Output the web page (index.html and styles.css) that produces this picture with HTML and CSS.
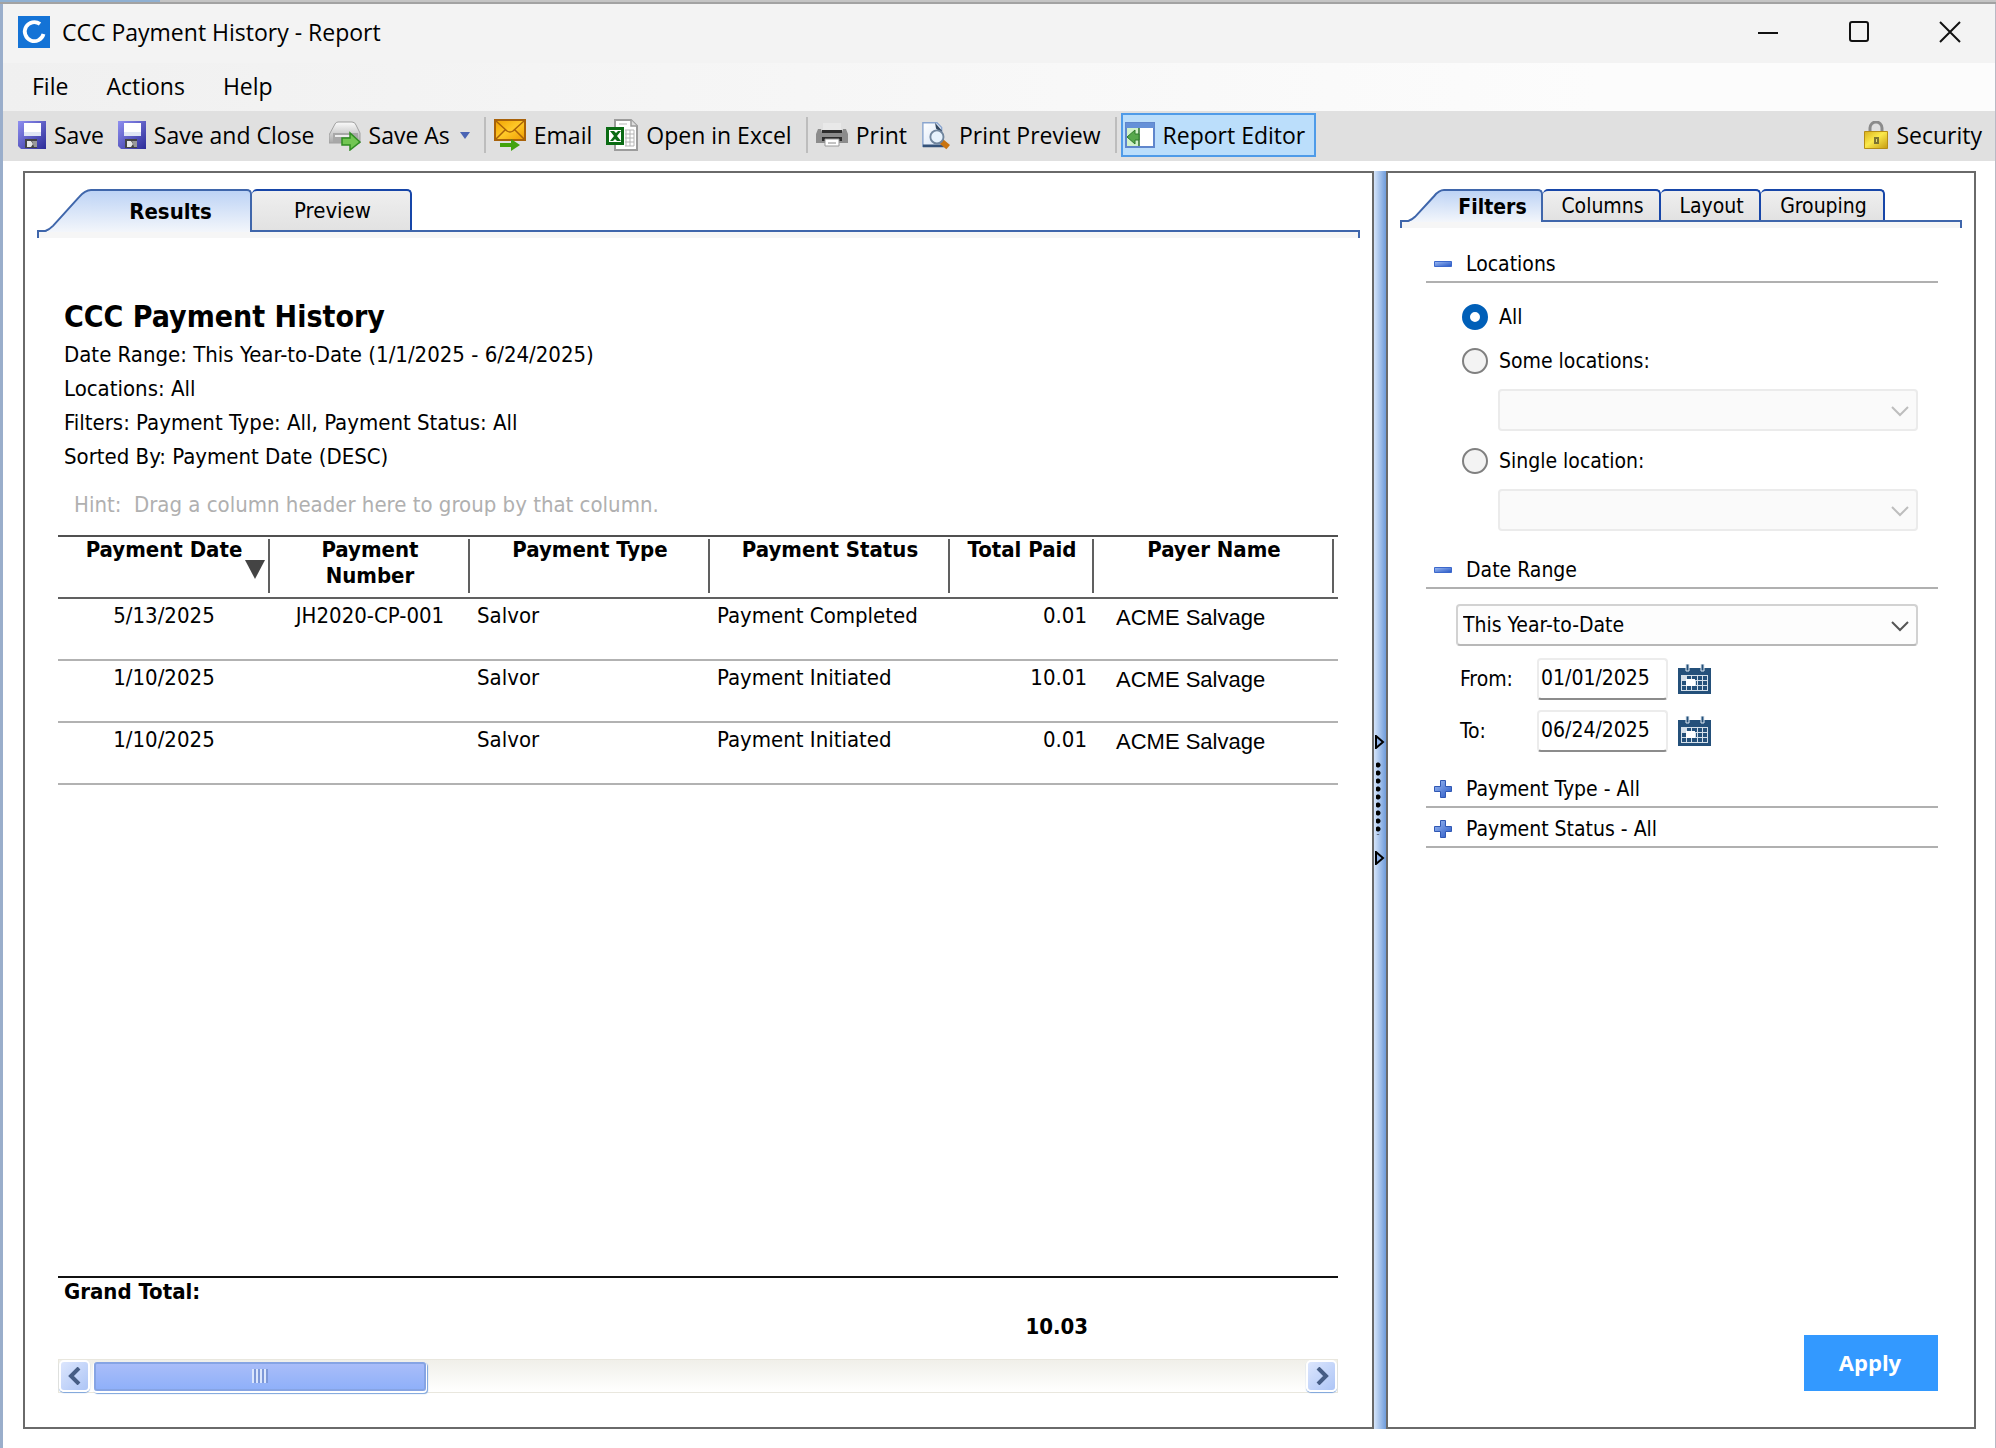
FILE: index.html
```html
<!DOCTYPE html>
<html lang="en">
<head>
    <meta charset="UTF-8">
    <meta name="viewport" content="width=device-width, initial-scale=1.0">
    <title>CCC Payment History - Report</title>
    <link rel="stylesheet" href="styles.css">
</head>
<body>
    <!-- shared gradients and the icons that are used twice -->
    <svg class="defs" aria-hidden="true">
        <defs>
            <linearGradient id="g-floppy" x1="0" y1="0" x2="1" y2="1"><stop offset="0" stop-color="#8f8ff0"/><stop offset="1" stop-color="#2c2c98"/></linearGradient>
            <linearGradient id="g-tab" x1="0" y1="0" x2="0" y2="1"><stop offset="0" stop-color="#bdd3f5"/><stop offset="1" stop-color="#f3f6fb"/></linearGradient>
            <linearGradient id="g-grey" x1="0" y1="0" x2="0" y2="1"><stop offset="0" stop-color="#fbfbfb"/><stop offset="1" stop-color="#a9a9a9"/></linearGradient>
            <linearGradient id="g-mail" x1="0" y1="0" x2="1" y2="1"><stop offset="0" stop-color="#f0a000"/><stop offset=".5" stop-color="#ffc928"/><stop offset="1" stop-color="#ef9c00"/></linearGradient>
            <linearGradient id="g-lock" x1="0" y1="0" x2="1" y2="1"><stop offset="0" stop-color="#d9b11c"/><stop offset=".45" stop-color="#fbe94c"/><stop offset="1" stop-color="#c59a10"/></linearGradient>
            <linearGradient id="g-blue" x1="0" y1="0" x2="1" y2="1"><stop offset="0" stop-color="#9fbcf3"/><stop offset="1" stop-color="#2455c4"/></linearGradient>
            <linearGradient id="g-page" x1="0" y1="0" x2="1" y2="1"><stop offset="0" stop-color="#fff"/><stop offset="1" stop-color="#d3e2f7"/></linearGradient>
            <symbol id="i-floppy" viewBox="0 0 28 28">
                <path d="M0 0h28v28H3l-3-3z" fill="url(#g-floppy)"/>
                <path d="M6 2h17v12H6z" fill="#fff"/>
                <path d="M6 11h17v4H6z" fill="#dfe6f5"/>
                <path d="M7 18h12v9H7z" fill="#444"/>
                <path d="M9 20h4l2 3-2 3H9z" fill="#e8e8e8"/>
                <path d="M14 20h5v6h-3z" fill="#9a9a9a"/>
            </symbol>
            <symbol id="i-calendar" viewBox="0 0 33 30">
                <path d="M0 4h33v26H0z" fill="#24507a"/>
                <path d="M8 0h3v7H8zM23 0h3v7h-3z" fill="#24507a" stroke="#dfe8f0" stroke-width="1"/>
                <path d="M3 11h27v16H3z" fill="#d5e0ea"/>
                <path d="M9 12h4v4H9zM14 12h5v4h-5zM20 12h4v4h-4zM25 12h4v4h-4zM4 17h4v4H4zM18 17h1v4h-1zM20 17h4v4h-4zM25 17h4v4h-4zM4 22h4v4H4zM9 22h4v4H9zM14 22h5v4h-5zM20 22h4v4h-4zM25 22h4v4h-4z" fill="#24507a"/>
                <path d="M8 15h9v7H8z" fill="#fff"/>
            </symbol>
            <symbol id="i-minus" viewBox="0 0 18 18">
                <path d="M.5 6.500h17v5H.5z" fill="url(#g-blue)" stroke="#3c68cc"/>
            </symbol>
            <symbol id="i-plus" viewBox="0 0 18 18">
                <path d="M6.500.5h5v6h6v5h-6v6h-5v-6h-6v-5h6z" fill="url(#g-blue)" stroke="#3058b4"/>
            </symbol>
            <symbol id="i-chevron" viewBox="0 0 18 11">
                <path d="M1 1l8 8 8-8" fill="none" stroke="currentColor" stroke-width="2"/>
            </symbol>
        </defs>
    </svg>

    <div class="backdrop"></div>
    <div class="window">
        <header class="titlebar">
            <svg class="app-icon" viewBox="0 0 32 32"><path d="M0 0h32v32H0z" fill="#1473d6"/><path d="M22 8A9.500 9.500 0 1 0 25.500 18" fill="none" stroke="#fff" stroke-width="3.800"/></svg>
            <h1 class="window-title">CCC Payment History - Report</h1>
            <div class="window-buttons">
                <button class="window-button" aria-label="Minimize"><svg viewBox="0 0 22 22"><path d="M1 12h20" stroke="#111" stroke-width="2"/></svg></button>
                <button class="window-button" aria-label="Maximize"><svg viewBox="0 0 22 22"><rect x="2" y="1" width="18" height="19" rx="2" fill="none" stroke="#111" stroke-width="2"/></svg></button>
                <button class="window-button" aria-label="Close"><svg viewBox="0 0 22 22"><path d="M1 1l20 20M21 1L1 21" stroke="#111" stroke-width="2"/></svg></button>
            </div>
        </header>

        <nav class="menubar">
            <button class="menu-item">File</button>
            <button class="menu-item">Actions</button>
            <button class="menu-item">Help</button>
        </nav>

        <div class="toolbar">
            <button class="tool"><svg class="icon-sm"><use href="#i-floppy"/></svg>Save</button>
            <button class="tool"><svg class="icon-sm"><use href="#i-floppy"/></svg>Save and Close</button>
            <button class="tool">
                <svg class="icon" viewBox="0 0 32 32">
                    <path d="M6 5q1-2 3-2h14q3 0 4 3l4 8v10H0V16z" fill="url(#g-grey)" stroke="#a0a0a0"/>
                    <path d="M4 14h25v9H4z" fill="#a8a8a8"/><path d="M6 16h17v2H6z" fill="#eee"/>
                    <path d="M13 19h8v-5l10 9-10 8v-5h-8z" fill="#72c653" stroke="#2f8c22" stroke-width="1.500"/>
                </svg>Save As
                <svg class="drop-arrow" viewBox="0 0 10 7"><path d="M0 0h10L5 7z" fill="#4a64b4"/></svg>
            </button>
            <span class="separator"></span>
            <button class="tool">
                <svg class="icon" viewBox="0 0 32 32">
                    <path d="M1 1h30v20H1z" fill="url(#g-mail)" stroke="#a8620a" stroke-width="2"/>
                    <path d="M2 2l11 10q3 2 6 0L30 2M2 20l9-9M30 20l-9-9" fill="none" stroke="#a8620a" stroke-width="1.500"/>
                    <path d="M6 24h11v-4l9 6-9 6v-4H6z" fill="#43a30d"/>
                </svg>Email
            </button>
            <button class="tool">
                <svg class="icon" viewBox="0 0 32 32">
                    <path d="M9 1h16l6 6v24H9z" fill="#fff" stroke="#9c9c9c" stroke-width="2"/>
                    <path d="M25 1v6h6" fill="#ddd" stroke="#9c9c9c" stroke-width="1.500"/>
                    <path d="M13 5h8M19 11h9M19 15h9M19 19h9M19 23h9M19 27h9M20 11v16M24 11v16M28 11v16" stroke="#b5b5b5" fill="none"/>
                    <path d="M0 8h18v18H0z" fill="#0b6b14"/>
                    <path d="M3 11h12v12H3z" fill="#fff"/>
                    <path d="M4 12h4l2 2 2-2h3l-4 5 4 5h-4l-2-2-2 2H4l4-5z" fill="#0b6b14"/>
                </svg>Open in Excel
            </button>
            <span class="separator"></span>
            <button class="tool">
                <svg class="icon" viewBox="0 0 32 32">
                    <path d="M7 4h18v8H7z" fill="#e9e9e9"/>
                    <path d="M2 10h3l1 3h20l1-3h3l2 5v9H0v-9z" fill="#8c8c8c"/>
                    <path d="M6 11h20v3H6zM6 18h20v4H6z" fill="#2d2d2d"/>
                    <path d="M9 20h14v7H9z" fill="#fff" stroke="#999"/>
                    <path d="M12 24h8" stroke="#888"/>
                </svg>Print
            </button>
            <button class="tool">
                <svg class="icon-md" viewBox="0 0 30 32">
                    <path d="M1 3h15l5 5v20H1z" fill="url(#g-page)" stroke="#8aa5cf" stroke-width="1.500"/>
                    <path d="M14 3l7 8v3l-6-5z" fill="#33475f"/>
                    <path d="M1 26h21l2 3H1z" fill="#34527a"/>
                    <path d="M21 23l7 6" stroke="#c9730f" stroke-width="6"/>
                    <circle cx="16" cy="18" r="7" fill="#e6f2fd" stroke="#71869e" stroke-width="2"/>
                </svg>Print Preview
            </button>
            <span class="separator separator-last"></span>
            <button class="tool tool-active" aria-pressed="true">
                <svg class="icon-md" viewBox="0 0 30 26">
                    <path d="M1 1h28v24H1z" fill="#fff" stroke="#5f86cc" stroke-width="2"/>
                    <path d="M1 1h28v5H1z" fill="#6590d8"/>
                    <path d="M2 6h12v18H2z" fill="#d2f2c9"/>
                    <path d="M14 6v18" stroke="#2d6f2c" stroke-width="1.500"/>
                    <path d="M2 15l8-7v4h4v6h-4v4z" fill="#57a84c" stroke="#2f7a2c"/>
                </svg>Report Editor
            </button>
            <button class="tool tool-security">
                <svg class="icon-lock" viewBox="0 0 24 28">
                    <path d="M6 12V7a6 6 0 0 1 12 0v5" fill="none" stroke="#8b8b8b" stroke-width="3"/>
                    <path d="M.5 10.500h23v17H.5z" fill="url(#g-lock)" stroke="#b58d16"/>
                    <path d="M10 16h5v7h-5z" fill="#7d7430"/><path d="M12 18h1v3h-1z" fill="#e8dc7a"/>
                </svg>Security
            </button>
        </div>

        <main class="workspace">
            <section class="panel panel-results">
                <div class="tabs" role="tablist">
                    <button class="tab-active tab-results" role="tab" aria-selected="true">
                        <svg class="slope" viewBox="0 0 46 42" preserveAspectRatio="none"><path d="M0 42Q4 41 8 36L34 8Q40 1 46 1V42z" fill="url(#g-tab)"/><path d="M0 41Q4 40 8 36L34 8Q40 1 46 1" fill="none" stroke="#3f66ab" stroke-width="2"/></svg>
                        <span class="tab-face">Results</span>
                    </button>
                    <button class="tab tab-preview" role="tab">Preview</button>
                </div>
                <div class="tab-line"></div>

                <div class="report">
                    <h2 class="report-title">CCC Payment History</h2>
                    <p class="report-info">Date Range: This Year-to-Date (1/1/2025 - 6/24/2025)</p>
                    <p class="report-info">Locations: All</p>
                    <p class="report-info">Filters: Payment Type: All, Payment Status: All</p>
                    <p class="report-info">Sorted By: Payment Date (DESC)</p>
                    <p class="hint">Hint:&nbsp; Drag a column header here to group by that column.</p>

                    <table class="grid">
                        <colgroup>
                            <col class="col-date"><col class="col-number"><col class="col-type"><col class="col-status"><col class="col-paid"><col>
                        </colgroup>
                        <thead>
                            <tr>
                                <th><div class="head">Payment Date<svg class="sort" viewBox="0 0 20 19"><path d="M0 0h20L10 19z" fill="#444"/></svg></div></th>
                                <th><div class="head">Payment<br>Number</div></th>
                                <th><div class="head">Payment Type</div></th>
                                <th><div class="head">Payment Status</div></th>
                                <th><div class="head">Total Paid</div></th>
                                <th class="th-last"><div class="head">Payer Name</div></th>
                            </tr>
                        </thead>
                        <tbody>
                            <tr><td class="center">5/13/2025</td><td class="center">JH2020-CP-001</td><td>Salvor</td><td>Payment Completed</td><td class="num">0.01</td><td class="payer">ACME Salvage</td></tr>
                            <tr><td class="center">1/10/2025</td><td></td><td>Salvor</td><td>Payment Initiated</td><td class="num">10.01</td><td class="payer">ACME Salvage</td></tr>
                            <tr><td class="center">1/10/2025</td><td></td><td>Salvor</td><td>Payment Initiated</td><td class="num">0.01</td><td class="payer">ACME Salvage</td></tr>
                        </tbody>
                    </table>

                    <div class="grand-total">
                        <div class="total-label">Grand Total:</div>
                        <div class="total-value">10.03</div>
                    </div>
                    <div class="scrollbar">
                        <button class="scroll-button" aria-label="Scroll left"><svg viewBox="0 0 14 18"><path d="M11 1L3 9l8 8" fill="none" stroke="#465d85" stroke-width="4"/></svg></button>
                        <div class="thumb"><span class="grip"></span></div>
                        <button class="scroll-button scroll-right" aria-label="Scroll right"><svg viewBox="0 0 14 18"><path d="M3 1l8 8-8 8" fill="none" stroke="#465d85" stroke-width="4"/></svg></button>
                    </div>
                </div>
            </section>

            <div class="splitter">
                <svg class="handle" viewBox="0 0 10 14"><path d="M1 1v12l7-6z" fill="#8fb2e8" stroke="#000" stroke-width="2"/></svg>
                <span class="dots"></span>
                <svg class="handle" viewBox="0 0 10 14"><path d="M1 1v12l7-6z" fill="#8fb2e8" stroke="#000" stroke-width="2"/></svg>
            </div>

            <aside class="panel panel-filters">
                <div class="tabs tabs-small" role="tablist">
                    <button class="tab-active tab-filters" role="tab" aria-selected="true">
                        <svg class="slope" viewBox="0 0 36 32" preserveAspectRatio="none"><path d="M0 32Q4 31 7 27L26 7Q31 1 36 1V32z" fill="url(#g-tab)"/><path d="M0 31Q4 30 7 27L26 7Q31 1 36 1" fill="none" stroke="#3f66ab" stroke-width="2"/></svg>
                        <span class="tab-face">Filters</span>
                    </button>
                    <button class="tab tab-columns" role="tab">Columns</button>
                    <button class="tab tab-layout" role="tab">Layout</button>
                    <button class="tab tab-grouping" role="tab">Grouping</button>
                </div>
                <div class="tab-line"></div>

                <form class="filters">
                    <button type="button" class="section-head"><svg class="toggle"><use href="#i-minus"/></svg>Locations</button>
                    <div class="section-body locations">
                        <label class="radio"><input type="radio" name="location" checked>All</label>
                        <label class="radio"><input type="radio" name="location">Some locations:</label>
                        <div class="select-wrap">
                            <select class="select" disabled aria-label="Some locations"><option></option></select>
                            <svg class="chevron"><use href="#i-chevron"/></svg>
                        </div>
                        <label class="radio"><input type="radio" name="location">Single location:</label>
                        <div class="select-wrap">
                            <select class="select" disabled aria-label="Single location"><option></option></select>
                            <svg class="chevron"><use href="#i-chevron"/></svg>
                        </div>
                    </div>

                    <button type="button" class="section-head"><svg class="toggle"><use href="#i-minus"/></svg>Date Range</button>
                    <div class="section-body dates">
                        <div class="select-wrap">
                            <select class="select" aria-label="Date Range"><option>This Year-to-Date</option></select>
                            <svg class="chevron"><use href="#i-chevron"/></svg>
                        </div>
                        <div class="date-row">
                            <label for="from">From:</label>
                            <input class="date" id="from" type="text" value="01/01/2025">
                            <button type="button" class="calendar" aria-label="Pick from date"><svg><use href="#i-calendar"/></svg></button>
                        </div>
                        <div class="date-row">
                            <label for="to">To:</label>
                            <input class="date" id="to" type="text" value="06/24/2025">
                            <button type="button" class="calendar" aria-label="Pick to date"><svg><use href="#i-calendar"/></svg></button>
                        </div>
                    </div>

                    <button type="button" class="section-head"><svg class="toggle"><use href="#i-plus"/></svg>Payment Type - All</button>
                    <button type="button" class="section-head section-next"><svg class="toggle"><use href="#i-plus"/></svg>Payment Status - All</button>

                    <button type="button" class="apply">Apply</button>
                </form>
            </aside>
        </main>
    </div>
</body>
</html>
```

FILE: styles.css
```css
* { box-sizing: border-box; }
body { margin: 0; height: 100vh; display: flex; flex-direction: column; font: 23px/30px "Open Sans", sans-serif; color: #000; background: #fff; }
button { font: inherit; color: inherit; border: 0; padding: 0; margin: 0; background: none; }
h1, h2, p { margin: 0; }
svg { display: block; }
.defs { position: absolute; width: 0; height: 0; }

.backdrop { height: 4px; background: linear-gradient(90deg, #8fb0d2 160px, #c4c4c4 160px); border-bottom: 2px solid #a2a2a2; }
.window { flex: 1; display: flex; flex-direction: column; border-left: 3px solid #9aaecb; border-right: 1px solid #b9b9c4; min-height: 0; }

/* title and menu */
.titlebar { height: 59px; display: flex; align-items: center; padding: 0 34px 4px 15px; background: #f3f3f3; }
.app-icon { width: 32px; height: 32px; }
.window-title { font-size: 23px; font-weight: normal; margin-left: 12px; }
.window-buttons { margin-left: auto; display: flex; gap: 69px; }
.window-button { width: 22px; }
.window-button svg { width: 22px; height: 22px; }
.menubar { height: 48px; display: flex; align-items: center; gap: 38px; padding: 0 29px 2px; background: linear-gradient(90deg, #f0f0f0, #fcfcfc 80%); }

/* toolbar */
.toolbar { height: 50px; display: flex; align-items: center; padding: 0 13px 2px 15px; background: #e0e0e0; }
.tool { display: flex; align-items: center; gap: 8px; margin-right: 14px; white-space: nowrap; }
.icon-sm { width: 28px; height: 28px; }
.icon-md { width: 30px; height: 30px; }
.icon { width: 32px; height: 32px; }
.icon-lock { width: 24px; height: 28px; }
.drop-arrow { width: 10px; height: 7px; margin-left: 2px; }
.separator { width: 2px; height: 36px; background: #bdbdbd; margin-right: 8px; }
.separator-last { margin-right: 4px; }
.tool-active { height: 44px; padding: 0 9px 0 2px; background: #bbdefb; border: 2px solid #4f9be8; }
.tool-security { margin-left: auto; margin-right: 0; }

/* panels */
.workspace { flex: 1; display: flex; padding: 10px 19px 19px 20px; min-height: 0; font-family: "DejaVu Sans Condensed", "Open Sans", sans-serif; font-size: 22px; }
.panel { display: flex; flex-direction: column; border: 2px solid #6a6a6a; background: #fff; padding-top: 16px; }
.panel-results { flex: 1; min-width: 0; }
.panel-filters { width: 590px; font-size: 21px; }
.splitter { width: 12px; display: flex; flex-direction: column; align-items: flex-end; background: linear-gradient(90deg, #d6e5fa, #6f9cdb); padding: 564px 1px 0 0; }
.handle { width: 10px; height: 14px; }
.dots { width: 5px; height: 74px; margin: 12px 4px 16px 0; background: radial-gradient(circle at 2px 4px, #000 2px, transparent 3px) 0 0 / 5px 8px; }

/* tabs */
.tabs { display: flex; height: 41px; margin: 0 12px 0 20px; }
.tab-active { display: flex; height: 43px; font-weight: bold; position: relative; }
.slope { width: 46px; height: 43px; }
.tab-face { flex: 1; height: 43px; display: flex; align-items: center; justify-content: center; border-top: 2px solid #3f66ab; border-right: 2px solid #3f66ab; border-radius: 0 5px 0 0; background: linear-gradient(#bdd3f5, #f3f6fb); }
.tab { height: 41px; padding: 1px 0 0 3px; border: 2px solid #1746a8; border-left: 0; border-bottom: 0; border-radius: 5px 5px 0 0; background: linear-gradient(#efefef, #e2e2e2); }
.tab-results { width: 207px; }
.tab-preview { width: 160px; }
.tab-line { height: 8px; margin: 0 12px; border: 2px solid #3f66ab; border-bottom: 0; background: #f6f6f6; }
.tabs-small { height: 31px; }
.tabs-small .tab-active, .tabs-small .tab-face, .tabs-small .slope { height: 33px; }
.tabs-small .slope { width: 36px; }
.tabs-small .tab { height: 31px; line-height: 28px; }
.tab-filters { width: 135px; }
.tab-columns { width: 118px; }
.tab-layout { width: 100px; }
.tab-grouping { width: 124px; }

/* report */
.report { flex: 1; display: flex; flex-direction: column; padding: 59px 34px 34px 33px; }
.report-title { font-size: 30px; line-height: 40px; padding: 0 6px; margin-bottom: 1px; }
.report-info { line-height: 34px; padding: 0 6px; }
.hint { line-height: 34px; margin: 14px 0 13px; padding: 0 16px; color: #b0b0b0; }
.grid { width: 100%; table-layout: fixed; border-collapse: separate; border-spacing: 0; border-top: 2px solid #505050; line-height: 26px; }
.col-date { width: 212px; }
.col-number { width: 200px; }
.col-type, .col-status { width: 240px; }
.col-paid { width: 144px; }
.grid th { padding: 0 0 4px; height: 62px; border-bottom: 2px solid #606060; vertical-align: top; }
.grid .th-last { padding-right: 4px; }
.head { height: 56px; position: relative; background: linear-gradient(#606060, #606060) right bottom / 2px 54px no-repeat; }
.sort { position: absolute; right: 5px; top: 23px; width: 20px; height: 19px; }
.grid td { height: 62px; padding: 4px 7px 0; border-bottom: 2px solid #b2b2b2; vertical-align: top; }
.grid .center { text-align: center; }
.grid .num { text-align: right; }
.grid .payer { padding: 6px 0 0 22px; font-family: "Liberation Sans", Arial, sans-serif; }
.grand-total { margin-top: auto; border-top: 2px solid #111; padding: 1px 6px 0; font-weight: bold; line-height: 26px; }
.total-value { width: 1024px; margin-top: 9px; text-align: right; }
.scrollbar { height: 34px; margin-top: 19px; display: flex; align-items: center; gap: 4px; border: 1px solid #e9e7de; background: linear-gradient(#f0efe9, #fff); }
.scroll-button { width: 31px; height: 32px; display: flex; align-items: center; justify-content: center; border: 2px solid #fff; border-radius: 5px; background: linear-gradient(135deg, #dce6fd, #adc5f6); box-shadow: 0 1px 1px #7ba3dc; }
.scroll-button svg { width: 14px; height: 18px; }
.scroll-right { margin-left: auto; }
.thumb { width: 332px; height: 29px; display: flex; align-items: center; justify-content: center; border: 2px solid #86a4e4; border-radius: 3px; background: linear-gradient(#a9bdf9, #8fb0f9); box-shadow: 0 1px 0 1px #fff, 1px 2px 1px 1px #7ba3dc; }
.grip { width: 16px; height: 14px; background: repeating-linear-gradient(90deg, #dbe6fd 0 2px, #7d98d8 2px 4px); }

/* filters */
.filters { flex: 1; display: flex; flex-direction: column; padding: 21px 36px 36px 38px; }
.section-head { display: flex; align-items: center; gap: 14px; height: 34px; padding: 0 8px 2px; border-bottom: 2px solid #b0b0b0; }
.toggle { width: 18px; height: 18px; }
.section-next { margin-top: 6px; }
.section-body { display: flex; flex-direction: column; }
.locations { padding: 21px 20px 24px 36px; }
.radio { display: flex; align-items: center; gap: 11px; height: 26px; }
.radio + .radio { margin-top: 18px; }
.radio input { appearance: none; width: 26px; height: 26px; margin: 0; border: 2px solid #808080; border-radius: 50%; background: #f3f3f3; }
.radio input:checked { border: 8px solid #005fb8; background: #fff; }
.select-wrap { position: relative; height: 42px; color: #555; }
.locations .select-wrap { margin: 15px 0 17px 36px; color: #bdbdbd; }
.locations .select-wrap:last-child { margin-bottom: 0; }
.select { appearance: none; width: 100%; height: 42px; padding: 0 5px; font: inherit; color: #000; border: 2px solid #d2d2d2; border-bottom-color: #b8b8b8; border-radius: 4px; background: #fdfdfd; }
.select:disabled { border-color: #ebebeb; background: #fafafa; opacity: 1; }
.chevron { position: absolute; right: 9px; top: 17px; width: 18px; height: 11px; }
.dates { padding: 15px 20px 22px 30px; }
.date-row { display: flex; align-items: center; margin-top: 10px; padding-left: 4px; }
.select-wrap + .date-row { margin-top: 12px; }
.date-row label { width: 77px; }
.date { width: 131px; height: 42px; padding: 0 2px 2px; font: inherit; border: 2px solid #ececec; border-bottom-color: #8c8c8c; border-radius: 4px; }
.calendar { margin-left: 10px; }
.calendar svg { width: 33px; height: 30px; }
.apply { width: 134px; height: 56px; margin-top: auto; align-self: flex-end; padding: 0 2px 2px 0; font: bold 22px/30px "Open Sans", sans-serif; color: #fff; background: #3399ff; }
```
